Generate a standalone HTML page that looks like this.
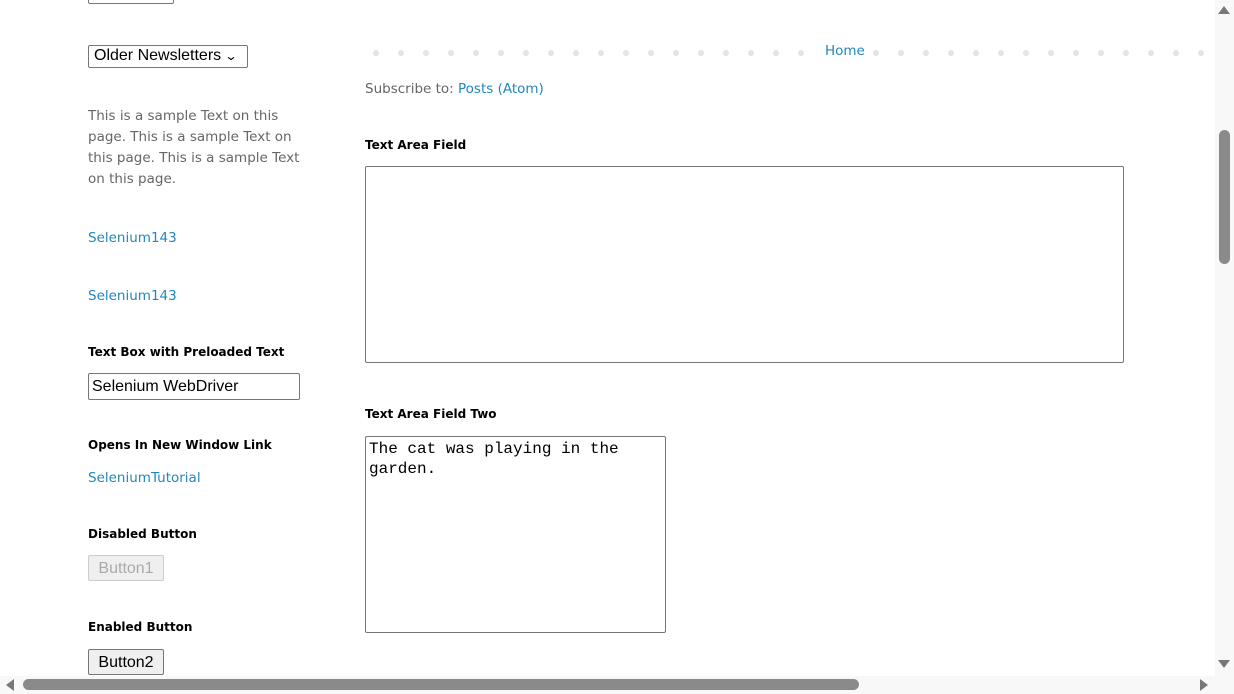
<!DOCTYPE html>
<html><head><meta charset="utf-8"><style>
html,body{margin:0;padding:0;width:1234px;height:694px;overflow:hidden;background:#fff;font-family:"DejaVu Sans","Liberation Sans",sans-serif;}
.a{position:absolute}
.t{font-size:13.5px;color:#666;line-height:21px}
.lnk{color:#2288bb;font-size:13.5px}
.h{font-size:12px;font-weight:bold;color:#000}
.btn{font-family:"Liberation Sans",sans-serif;font-size:16px;border:1px solid #767676;border-radius:2px;background:#efefef;box-sizing:border-box}
.dot{position:absolute;top:50px;width:6px;height:6px;border-radius:3px;background:#e4e4e4}
</style></head><body>
<div class="a" style="left:88px;top:-20px;width:86px;height:24px;border:1px solid #767676;border-radius:2px;box-sizing:border-box"></div>
<div class="a" style="left:88px;top:45px;width:160px;height:23px;border:1px solid #767676;border-radius:2px;box-sizing:border-box;font-family:'Liberation Sans',sans-serif;font-size:16px;padding:1px 5px;color:#000">Older Newsletters <span style="display:inline-block;font-size:12px;transform:scaleX(1.3)">⌄</span></div>
<div class="a t" style="left:88px;top:106px;width:220px">This is a sample Text on this page. This is a sample Text on this page. This is a sample Text on this page.</div>
<div class="a lnk" style="left:88px;top:230px">Selenium143</div>
<div class="a lnk" style="left:88px;top:288px">Selenium143</div>
<div class="a h" style="left:88px;top:345px">Text Box with Preloaded Text</div>
<div class="a" style="left:88px;top:373px;width:212px;height:27px;border:1px solid #767676;border-radius:2px;box-sizing:border-box;font-family:'Liberation Sans',sans-serif;font-size:16px;padding:4px 3px;color:#000">Selenium WebDriver</div>
<div class="a h" style="left:88px;top:438px">Opens In New Window Link</div>
<div class="a lnk" style="left:88px;top:470px">SeleniumTutorial</div>
<div class="a h" style="left:88px;top:527px">Disabled Button</div>
<div class="a btn" style="left:88px;top:555px;width:76px;height:26px;color:#aaa;border-color:#ccc;text-align:center;line-height:25px">Button1</div>
<div class="a h" style="left:88px;top:620px">Enabled Button</div>
<div class="a btn" style="left:88px;top:649px;width:76px;height:26px;color:#000;text-align:center;line-height:25px">Button2</div>

<div id="dots"></div>
<div class="a lnk" style="left:822px;top:43px;background:#fff;padding:0 3px">Home</div>
<div class="a t" style="left:365px;top:79px">Subscribe to: <span style="color:#2288bb">Posts (Atom)</span></div>
<div class="a h" style="left:365px;top:138px">Text Area Field</div>
<div class="a" style="left:365px;top:166px;width:759px;height:197px;border:1px solid #767676;border-radius:2px;box-sizing:border-box"></div>
<div class="a h" style="left:365px;top:407px">Text Area Field Two</div>
<div class="a" style="left:365px;top:436px;width:301px;height:197px;border:1px solid #767676;border-radius:2px;box-sizing:border-box;font-family:'Liberation Mono',monospace;font-size:16px;line-height:20px;padding:2px 3px;color:#000">The cat was playing in the garden.</div>

<div class="a" style="left:1215px;top:0;width:19px;height:676px;background:#f8f8f8"></div>
<div class="a" style="left:1219px;top:130px;width:11px;height:134px;border-radius:6px;background:#8a8a8a"></div>
<div class="a" style="left:1218px;top:6px;width:0;height:0;border-left:6px solid transparent;border-right:6px solid transparent;border-bottom:8px solid #777"></div>
<div class="a" style="left:1218px;top:660px;width:0;height:0;border-left:6px solid transparent;border-right:6px solid transparent;border-top:8px solid #777"></div>
<div class="a" style="left:0;top:676px;width:1234px;height:18px;background:#f8f8f8"></div>
<div class="a" style="left:23px;top:679px;width:836px;height:11px;border-radius:6px;background:#8a8a8a"></div>
<div class="a" style="left:6px;top:679px;width:0;height:0;border-top:6px solid transparent;border-bottom:6px solid transparent;border-right:8px solid #777"></div>
<div class="a" style="left:1200px;top:679px;width:0;height:0;border-top:6px solid transparent;border-bottom:6px solid transparent;border-left:8px solid #777"></div>
<script>
var h='';for(var x=373;x<1210;x+=25){h+='<div class="dot" style="left:'+x+'px"></div>';}
document.getElementById('dots').innerHTML=h;
</script>
</body></html>
